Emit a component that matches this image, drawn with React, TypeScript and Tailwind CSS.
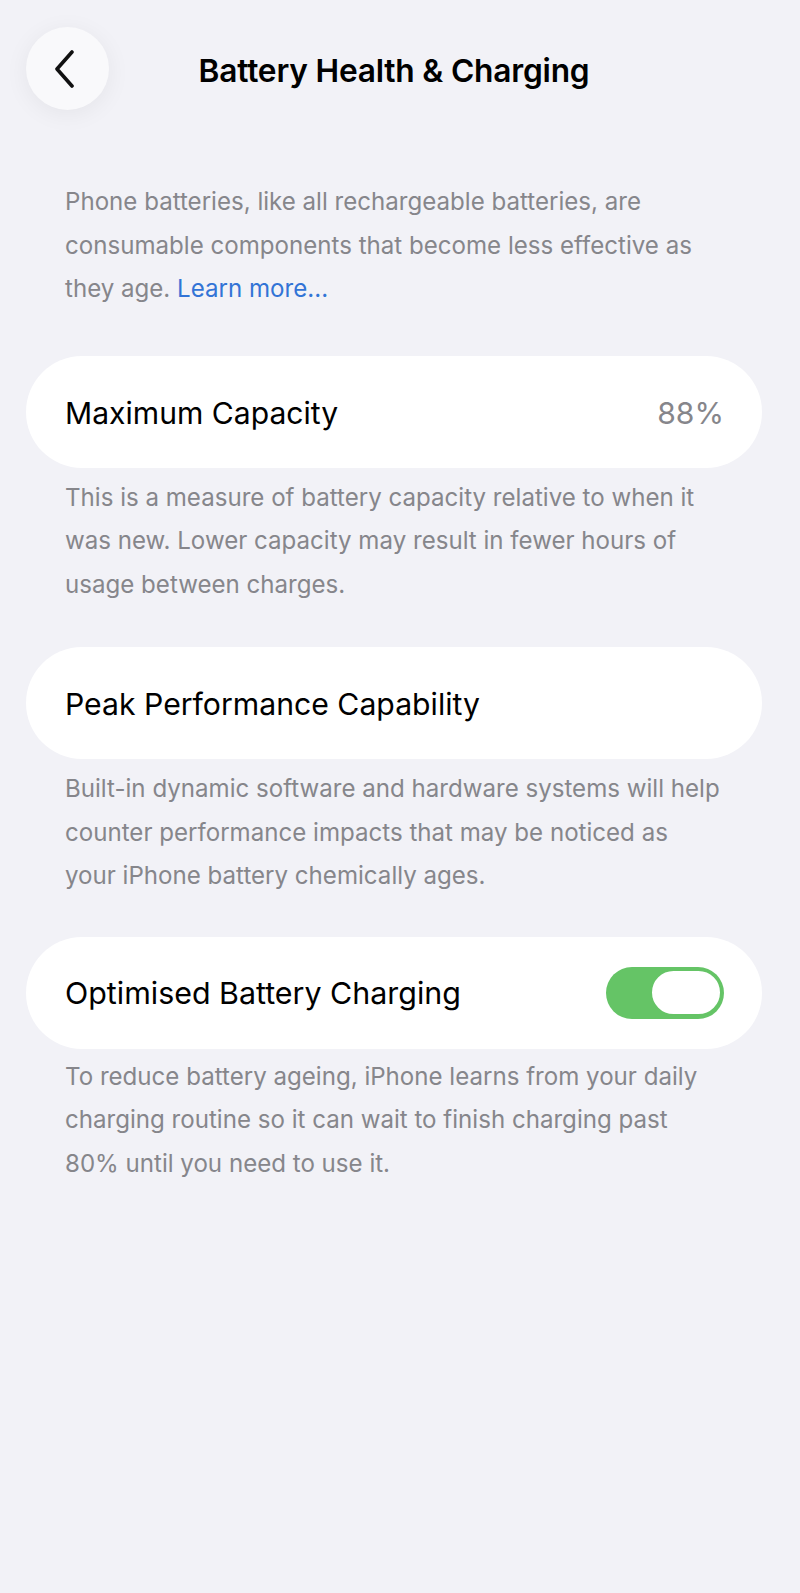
import React from "react";

function Lines({ lines, className }: { lines: React.ReactNode[]; className?: string }) {
  return (
    <p className={"pl-[65px] text-[24.1px] leading-[43.5px] text-[#86868b] whitespace-nowrap " + (className ?? "")}>
      {lines.map((l, i) => (
        <React.Fragment key={i}>
          {l}
          {i < lines.length - 1 && <br />}
        </React.Fragment>
      ))}
    </p>
  );
}

function Card({ children }: { children: React.ReactNode }) {
  return (
    <div className="ml-[26px] mr-[38px] h-[112px] rounded-[56px] bg-white pl-[39px] pr-[38px] flex items-center justify-between">
      {children}
    </div>
  );
}

export default function App() {
  return (
    <div
      className="w-[800px] min-h-[1593px] bg-[#f2f2f7] text-black"
      style={{ fontFamily: "Inter, 'Noto Sans', sans-serif" }}
    >
      <header className="grid grid-cols-[110px_1fr_122px] items-center pt-[27px]">
        <div className="pl-[26px]">
          <button className="w-[83px] h-[83px] rounded-full bg-[#f9f9fb] shadow-[0_4px_24px_rgba(0,0,0,0.06)] flex items-center justify-center">
            <svg width="24" height="38" viewBox="0 0 24 38" className="-ml-[6px]">
              <path d="M19 2 L4 19 L19 36" fill="none" stroke="#111" strokeWidth="3.6" strokeLinecap="round" strokeLinejoin="round" />
            </svg>
          </button>
        </div>
        <h1 className="text-center text-[31.7px] font-semibold tracking-[-0.2px] pt-[5px]">Battery Health &amp; Charging</h1>
        <div />
      </header>

      <Lines
        className="mt-[70px] mb-[45px]"
        lines={[
          "Phone batteries, like all rechargeable batteries, are",
          "consumable components that become less effective as",
          <>
            they age. <span className="text-[#3274d6]">Learn more...</span>
          </>,
        ]}
      />

      <Card>
        <span className="text-[30.1px] pt-[4px]">Maximum Capacity</span>
        <span className="text-[30.1px] pt-[4px] text-[#86868b]">88%</span>
      </Card>
      <Lines
        className="pt-[8px] pb-[41px]"
        lines={[
          "This is a measure of battery capacity relative to when it",
          "was new. Lower capacity may result in fewer hours of",
          "usage between charges.",
        ]}
      />

      <Card>
        <span className="text-[30.2px] pt-[4px]">Peak Performance Capability</span>
      </Card>
      <Lines
        className="pt-[8px] pb-[39px]"
        lines={[
          "Built-in dynamic software and hardware systems will help",
          "counter performance impacts that may be noticed as",
          "your iPhone battery chemically ages.",
        ]}
      />

      <Card>
        <span className="text-[30.4px] pt-[2px]">Optimised Battery Charging</span>
        <div className="w-[118px] h-[52px] rounded-full bg-[#65c466] flex items-center justify-end pr-[2px]">
          <div className="w-[72px] h-[47px] rounded-full bg-white border-[2.5px] border-[#65c466]" />
        </div>
      </Card>
      <Lines
        className="pt-[6px] pb-[41px]"
        lines={[
          "To reduce battery ageing, iPhone learns from your daily",
          "charging routine so it can wait to finish charging past",
          "80% until you need to use it.",
        ]}
      />
    </div>
  );
}
